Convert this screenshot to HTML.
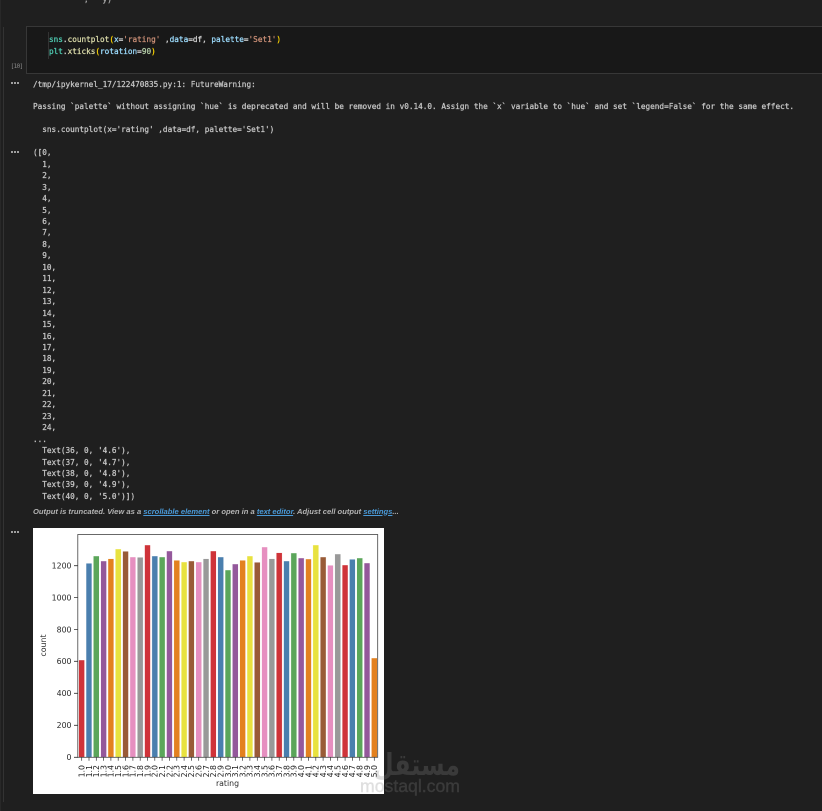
<!DOCTYPE html>
<html lang="en">
<head>
<meta charset="utf-8">
<title>Notebook output</title>
<style>
html,body{margin:0;padding:0;width:822px;height:811px;overflow:hidden;background:#1f1f1f}
#w{position:absolute;left:0;top:0;width:822px;height:811px;overflow:hidden;filter:blur(.35px)}
.abs{position:absolute}
pre{margin:0;font-family:"DejaVu Sans Mono","Liberation Mono",monospace;font-size:7.7px;letter-spacing:.012px;color:#c6c6c6;position:absolute;-webkit-text-stroke:.25px}
.dots{position:absolute;left:11px;width:8px;height:2px;background:repeating-linear-gradient(90deg,#a0a0a0 0 2px,#1f1f1f 2px 3px)}
.t{color:#4ec9b0}.f{color:#dcdcaa}.p{color:#ffd700}.v{color:#9cdcfe}.o{color:#d4d4d4}.s{color:#ce9178}.n{color:#b5cea8}
a{color:#4a9ad8;text-decoration:underline}
</style>
</head>
<body>
<div id="w">
<div class="abs" style="left:0;top:0;width:1px;height:811px;background:#282828"></div>
<div class="abs" style="left:3px;top:27px;width:1px;height:775px;background:#333333"></div>
<pre style="left:84px;top:-5.5px;line-height:9px;color:#a8a8a8">,   y)</pre>

<div class="abs" style="left:26px;top:26px;width:796px;height:46px;background:#181818;border:1px solid #373737;border-right:0"></div>
<div class="abs" style="left:48px;top:32px;width:1px;height:27px;background:#333333"></div>
<pre style="left:49px;top:34px;line-height:12px"><span class="t">sns</span><span class="o">.</span><span class="f">countplot</span><span class="p">(</span><span class="v">x</span><span class="o">=</span><span class="s">'rating'</span><span class="o"> ,</span><span class="v">data</span><span class="o">=df, </span><span class="v">palette</span><span class="o">=</span><span class="s">'Set1'</span><span class="p">)</span>
<span class="t">plt</span><span class="o">.</span><span class="f">xticks</span><span class="p">(</span><span class="v">rotation</span><span class="o">=</span><span class="n">90</span><span class="p">)</span></pre>
<pre style="left:10.5px;top:61px;line-height:10px;font-size:6.4px;letter-spacing:-.85px;color:#858585;-webkit-text-stroke:0">[10]</pre>

<div class="dots" style="top:82px"></div>
<pre style="left:33px;top:78.8px;line-height:11px">/tmp/ipykernel_17/122470835.py:1: FutureWarning:</pre>
<pre style="left:33px;top:100.7px;line-height:11px">Passing `palette` without assigning `hue` is deprecated and will be removed in v0.14.0. Assign the `x` variable to `hue` and set `legend=False` for the same effect.</pre>
<pre style="left:33px;top:123.7px;line-height:11px">  sns.countplot(x='rating' ,data=df, palette='Set1')</pre>

<div class="dots" style="top:151px"></div>
<pre style="left:33px;top:147.3px;line-height:11.46px">([0,
  1,
  2,
  3,
  4,
  5,
  6,
  7,
  8,
  9,
  10,
  11,
  12,
  13,
  14,
  15,
  16,
  17,
  18,
  19,
  20,
  21,
  22,
  23,
  24,
...
  Text(36, 0, '4.6'),
  Text(37, 0, '4.7'),
  Text(38, 0, '4.8'),
  Text(39, 0, '4.9'),
  Text(40, 0, '5.0')])</pre>

<div class="abs" style="left:33px;top:505.5px;width:400px;height:12px;font:italic bold 7.6px/12px 'Liberation Sans',sans-serif;color:#b4b4b4;white-space:nowrap">Output is truncated. View as a <a>scrollable element</a> or open in a <a>text editor</a>. Adjust cell output <a>settings</a>...</div>

<div class="dots" style="top:531px"></div>

<svg class="abs" style="left:0;top:0" width="822" height="811" viewBox="0 0 822 811" xmlns="http://www.w3.org/2000/svg">
<rect x="33" y="528" width="351" height="266" fill="#ffffff"/>
<g stroke="#ffffff" stroke-width=".4">
<rect x="78.7" y="660" width="5.85" height="97.3" fill="#cf3339"/>
<rect x="86.05" y="563.3" width="5.85" height="194" fill="#4a7fae"/>
<rect x="93.37" y="556" width="5.85" height="201.3" fill="#5ba65a"/>
<rect x="100.68" y="561" width="5.85" height="196.3" fill="#94589b"/>
<rect x="108" y="558.7" width="5.85" height="198.6" fill="#e3811f"/>
<rect x="115.32" y="549" width="5.85" height="208.3" fill="#e8e23f"/>
<rect x="122.63" y="551.3" width="5.85" height="206" fill="#995b37"/>
<rect x="129.95" y="557" width="5.85" height="200.3" fill="#e68fc0"/>
<rect x="137.27" y="557.3" width="5.85" height="200" fill="#999999"/>
<rect x="144.58" y="545" width="5.85" height="212.3" fill="#cf3339"/>
<rect x="151.9" y="556" width="5.85" height="201.3" fill="#4a7fae"/>
<rect x="159.22" y="557" width="5.85" height="200.3" fill="#5ba65a"/>
<rect x="166.53" y="551" width="5.85" height="206.3" fill="#94589b"/>
<rect x="173.85" y="560.3" width="5.85" height="197" fill="#e3811f"/>
<rect x="181.17" y="562" width="5.85" height="195.3" fill="#e8e23f"/>
<rect x="188.49" y="561" width="5.85" height="196.3" fill="#995b37"/>
<rect x="195.8" y="562" width="5.85" height="195.3" fill="#e68fc0"/>
<rect x="203.12" y="558.7" width="5.85" height="198.6" fill="#999999"/>
<rect x="210.44" y="551" width="5.85" height="206.3" fill="#cf3339"/>
<rect x="217.75" y="557" width="5.85" height="200.3" fill="#4a7fae"/>
<rect x="225.07" y="570" width="5.85" height="187.3" fill="#5ba65a"/>
<rect x="232.39" y="564" width="5.85" height="193.3" fill="#94589b"/>
<rect x="239.7" y="560.3" width="5.85" height="197" fill="#e3811f"/>
<rect x="247.02" y="556" width="5.85" height="201.3" fill="#e8e23f"/>
<rect x="254.34" y="562.3" width="5.85" height="195" fill="#995b37"/>
<rect x="261.65" y="547" width="5.85" height="210.3" fill="#e68fc0"/>
<rect x="268.97" y="558.7" width="5.85" height="198.6" fill="#999999"/>
<rect x="276.29" y="552.7" width="5.85" height="204.6" fill="#cf3339"/>
<rect x="283.6" y="561" width="5.85" height="196.3" fill="#4a7fae"/>
<rect x="290.92" y="553" width="5.85" height="204.3" fill="#5ba65a"/>
<rect x="298.24" y="558" width="5.85" height="199.3" fill="#94589b"/>
<rect x="305.56" y="559" width="5.85" height="198.3" fill="#e3811f"/>
<rect x="312.87" y="545" width="5.85" height="212.3" fill="#e8e23f"/>
<rect x="320.19" y="557" width="5.85" height="200.3" fill="#995b37"/>
<rect x="327.51" y="565.3" width="5.85" height="192" fill="#e68fc0"/>
<rect x="334.82" y="554" width="5.85" height="203.3" fill="#999999"/>
<rect x="342.14" y="565" width="5.85" height="192.3" fill="#cf3339"/>
<rect x="349.46" y="559.3" width="5.85" height="198" fill="#4a7fae"/>
<rect x="356.77" y="558" width="5.85" height="199.3" fill="#5ba65a"/>
<rect x="364.09" y="563" width="5.85" height="194.3" fill="#94589b"/>
<rect x="371.41" y="658" width="5.85" height="99.3" fill="#e3811f"/>
</g>
<rect x="77.8" y="534.5" width="299.9" height="222.8" fill="none" stroke="#444444" stroke-width=".8"/>
<path d="M74 757.3H78M74 725.3H78M74 693.3H78M74 661.3H78M74 629.5H78M74 597.6H78M74 565.7H78" stroke="#333333" stroke-width=".8"/>
<path d="M81.7 757.3v3.5M89 757.3v3.5M96.3 757.3v3.5M103.6 757.3v3.5M110.9 757.3v3.5M118.2 757.3v3.5M125.6 757.3v3.5M132.9 757.3v3.5M140.2 757.3v3.5M147.5 757.3v3.5M154.8 757.3v3.5M162.1 757.3v3.5M169.5 757.3v3.5M176.8 757.3v3.5M184.1 757.3v3.5M191.4 757.3v3.5M198.7 757.3v3.5M206 757.3v3.5M213.4 757.3v3.5M220.7 757.3v3.5M228 757.3v3.5M235.3 757.3v3.5M242.6 757.3v3.5M249.9 757.3v3.5M257.3 757.3v3.5M264.6 757.3v3.5M271.9 757.3v3.5M279.2 757.3v3.5M286.5 757.3v3.5M293.8 757.3v3.5M301.2 757.3v3.5M308.5 757.3v3.5M315.8 757.3v3.5M323.1 757.3v3.5M330.4 757.3v3.5M337.7 757.3v3.5M345.1 757.3v3.5M352.4 757.3v3.5M359.7 757.3v3.5M367 757.3v3.5M374.3 757.3v3.5" stroke="#333333" stroke-width=".7"/>
<g font-family="'DejaVu Sans',sans-serif" font-size="7.8" fill="#2a2a2a" text-anchor="end">
<text x="71.5" y="760">0</text>
<text x="71.5" y="728">200</text>
<text x="71.5" y="696">400</text>
<text x="71.5" y="664">600</text>
<text x="71.5" y="632.3">800</text>
<text x="71.5" y="600.4">1000</text>
<text x="71.5" y="568.5">1200</text>
</g>
<g font-family="'DejaVu Sans',sans-serif" font-size="7.8" fill="#2a2a2a" text-anchor="middle">
<text transform="translate(46,645.5) rotate(-90)">count</text>
<text x="227.5" y="786">rating</text>
</g>
<g font-family="'DejaVu Sans',sans-serif" font-size="7.8" fill="#222222" text-anchor="end">
<text transform="translate(84.5,765) rotate(-90)">1.0</text>
<text transform="translate(91.8,765) rotate(-90)">1.1</text>
<text transform="translate(99.1,765) rotate(-90)">1.2</text>
<text transform="translate(106.4,765) rotate(-90)">1.3</text>
<text transform="translate(113.7,765) rotate(-90)">1.4</text>
<text transform="translate(121,765) rotate(-90)">1.5</text>
<text transform="translate(128.4,765) rotate(-90)">1.6</text>
<text transform="translate(135.7,765) rotate(-90)">1.7</text>
<text transform="translate(143,765) rotate(-90)">1.8</text>
<text transform="translate(150.3,765) rotate(-90)">1.9</text>
<text transform="translate(157.6,765) rotate(-90)">2.0</text>
<text transform="translate(164.9,765) rotate(-90)">2.1</text>
<text transform="translate(172.3,765) rotate(-90)">2.2</text>
<text transform="translate(179.6,765) rotate(-90)">2.3</text>
<text transform="translate(186.9,765) rotate(-90)">2.4</text>
<text transform="translate(194.2,765) rotate(-90)">2.5</text>
<text transform="translate(201.5,765) rotate(-90)">2.6</text>
<text transform="translate(208.8,765) rotate(-90)">2.7</text>
<text transform="translate(216.2,765) rotate(-90)">2.8</text>
<text transform="translate(223.5,765) rotate(-90)">2.9</text>
<text transform="translate(230.8,765) rotate(-90)">3.0</text>
<text transform="translate(238.1,765) rotate(-90)">3.1</text>
<text transform="translate(245.4,765) rotate(-90)">3.2</text>
<text transform="translate(252.7,765) rotate(-90)">3.3</text>
<text transform="translate(260.1,765) rotate(-90)">3.4</text>
<text transform="translate(267.4,765) rotate(-90)">3.5</text>
<text transform="translate(274.7,765) rotate(-90)">3.6</text>
<text transform="translate(282,765) rotate(-90)">3.7</text>
<text transform="translate(289.3,765) rotate(-90)">3.8</text>
<text transform="translate(296.6,765) rotate(-90)">3.9</text>
<text transform="translate(304,765) rotate(-90)">4.0</text>
<text transform="translate(311.3,765) rotate(-90)">4.1</text>
<text transform="translate(318.6,765) rotate(-90)">4.2</text>
<text transform="translate(325.9,765) rotate(-90)">4.3</text>
<text transform="translate(333.2,765) rotate(-90)">4.4</text>
<text transform="translate(340.5,765) rotate(-90)">4.5</text>
<text transform="translate(347.9,765) rotate(-90)">4.6</text>
<text transform="translate(355.2,765) rotate(-90)">4.7</text>
<text transform="translate(362.5,765) rotate(-90)">4.8</text>
<text transform="translate(369.8,765) rotate(-90)">4.9</text>
<text transform="translate(377.1,765) rotate(-90)">5.0</text>
</g>
<g fill="#878787" opacity=".26">
<text x="373" y="775" font-family="'DejaVu Sans',sans-serif" font-weight="bold" font-size="30" textLength="87" lengthAdjust="spacingAndGlyphs">مستقل</text>
<text x="360" y="792" font-family="'Liberation Sans',sans-serif" font-size="17.5" stroke="#878787" stroke-width=".4" textLength="100" lengthAdjust="spacingAndGlyphs">mostaql.com</text>
</g>
</svg>
</div>
</body>
</html>
